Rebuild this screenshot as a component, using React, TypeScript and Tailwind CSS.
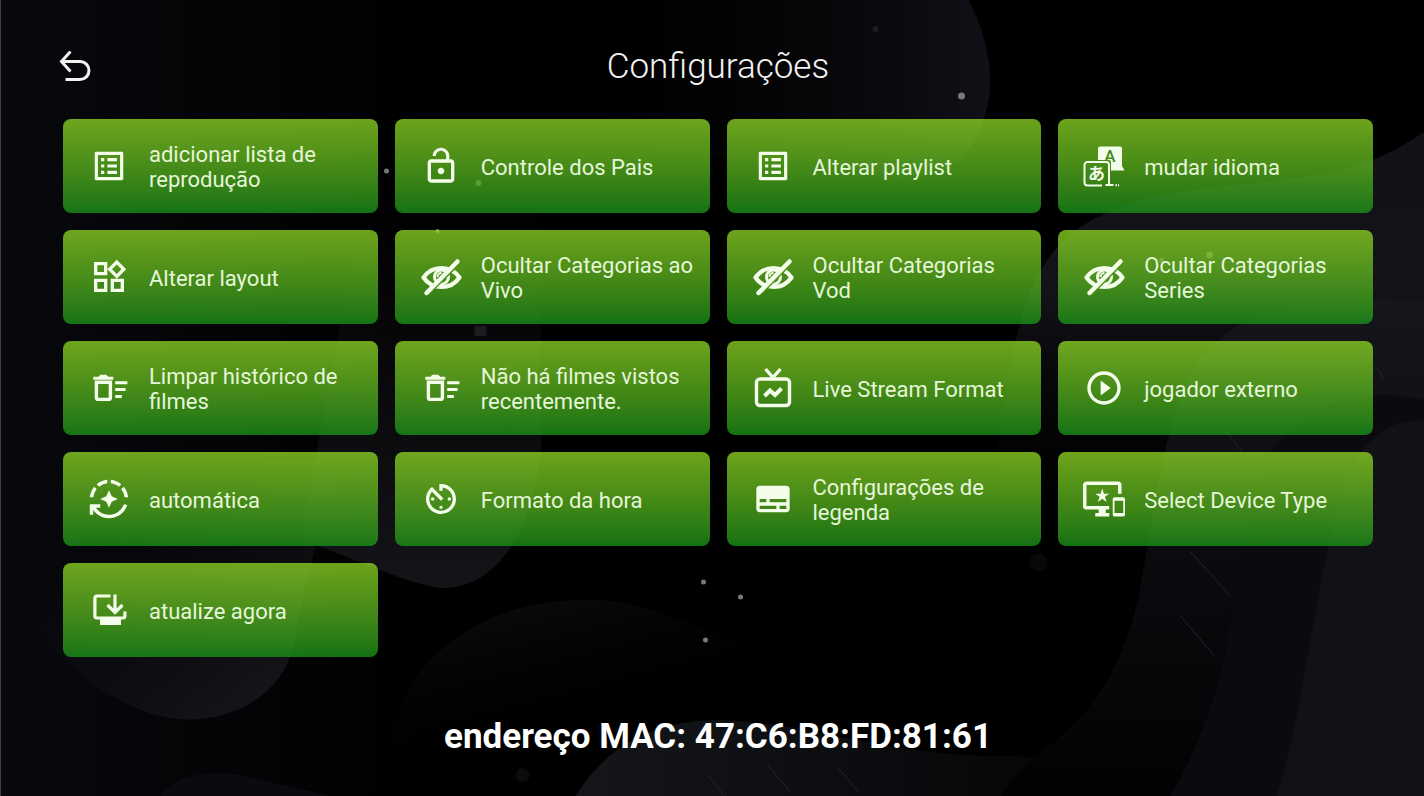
import type { ReactNode } from "react";
import {
  MdAutoMode,
  MdAvTimer,
  MdImportantDevices,
  MdListAlt,
  MdLockOpen,
  MdOutlineWidgets,
  MdPlayCircleOutline,
  MdSubtitles,
} from "react-icons/md";

interface SettingItem {
  label: string;
  icon: ReactNode;
}

function BackIcon() {
  return (
    <svg className="w-8 h-8" viewBox="0 0 32 32" fill="none" stroke="currentColor" strokeWidth="3">
      <path d="M11.5 0.5 2.5 10.500l9 10" />
      <path d="M2.5 10.500H21a9 9 0 0 1 0 18H6.5" />
    </svg>
  );
}

function HiddenEyeIcon() {
  return (
    <svg className="w-11 h-11" viewBox="0 0 44 44" fill="none" stroke="currentColor">
      <path
        d="M4.500 22.500C9 16 15 13 22.500 13S36 16 40.500 22.500C36 29 30 32 22.500 32S9 29 4.500 22.500Z"
        strokeWidth="4.200"
        strokeLinejoin="round"
      />
      <circle cx="22.500" cy="22" r="7" strokeWidth="3" />
      <path d="M18.500 22a4 4 0 0 1 4-4" strokeWidth="2" />
      <path d="M9.500 39.500 41.500 7.500" stroke="#4b931b" strokeWidth="2" />
      <path d="M7.500 38 38.500 6.500" strokeWidth="4.500" strokeLinecap="round" />
    </svg>
  );
}

function LanguageIcon() {
  return (
    <svg className="w-11 h-11" viewBox="0 0 44 44" fill="none">
      <path d="M18 2.500h20a2 2 0 0 1 2 2V22l2.500 4.500H29V18a2 2 0 0 0-2-2H16V4.500a2 2 0 0 1 2-2Z" fill="currentColor" />
      <text x="28" y="18" textAnchor="middle" fill="#3f8a18" fontSize="17" fontWeight="500" fontFamily="Roboto, sans-serif">
        A
      </text>
      <path d="M20 41.500H5.500a3 3 0 0 1-3-3V21a3 3 0 0 1 3-3H24a3 3 0 0 1 3 3v17.500" stroke="currentColor" strokeWidth="2" />
      <path d="M27 36v5M23.500 41h8M33.500 41.300h1.500M36 41.300h1" stroke="currentColor" strokeWidth="2" />
      <text
        x="14.500"
        y="36"
        textAnchor="middle"
        fill="currentColor"
        fontSize="17"
        fontWeight="700"
        fontFamily="'Noto Sans CJK JP', sans-serif"
      >
        あ
      </text>
    </svg>
  );
}

function LiveTvIcon() {
  return (
    <svg className="w-11 h-11" viewBox="0 0 44 44" fill="none" stroke="currentColor" strokeWidth="3.400">
      <rect x="5.500" y="13" width="33" height="26.500" rx="3.500" />
      <path d="M14.500 3 22 11.500 29.500 3" />
      <path d="m13.500 30 5.500-5.500 5 4.500 6.500-6.500" strokeWidth="4" />
    </svg>
  );
}

function ClearHistoryIcon() {
  return (
    <svg className="w-11 h-11" viewBox="0 0 44 44" fill="none" stroke="currentColor" strokeWidth="3">
      <path d="M6.300 10.800h5.200l1.800-2h6l1.800 2h5.200v3H6.300Z" fill="currentColor" stroke="none" />
      <path d="M9.400 16.200h14v15.200a2 2 0 0 1-2 2H11.400a2 2 0 0 1-2-2Z" strokeWidth="3.400" />
      <path d="M28.200 16.800h12.200M28.200 23.600h10.400M28.200 30.400h6.600" />
    </svg>
  );
}

function UpdateIcon() {
  return (
    <svg className="w-11 h-11" viewBox="0 0 44 44" fill="none" stroke="currentColor" strokeWidth="3.200">
      <path d="M23.500 8H9.900a2 2 0 0 0-2 2v18a2 2 0 0 0 2 2h26a2 2 0 0 0 2-2v-4.500" />
      <path d="M28 6.500V24M20.500 17l7.500 7.500 7.500-7.500" />
      <path d="M13 30h21v7H13Z" fill="currentColor" stroke="none" />
    </svg>
  );
}

const settings: SettingItem[] = [
  { label: "adicionar lista de reprodução", icon: <MdListAlt size={38} /> },
  { label: "Controle dos Pais", icon: <MdLockOpen size={40} /> },
  { label: "Alterar playlist", icon: <MdListAlt size={38} /> },
  { label: "mudar idioma", icon: <LanguageIcon /> },
  { label: "Alterar layout", icon: <MdOutlineWidgets size={40} /> },
  { label: "Ocultar Categorias ao Vivo", icon: <HiddenEyeIcon /> },
  { label: "Ocultar Categorias Vod", icon: <HiddenEyeIcon /> },
  { label: "Ocultar Categorias Series", icon: <HiddenEyeIcon /> },
  { label: "Limpar histórico de filmes", icon: <ClearHistoryIcon /> },
  { label: "Não há filmes vistos recentemente.", icon: <ClearHistoryIcon /> },
  { label: "Live Stream Format", icon: <LiveTvIcon /> },
  { label: "jogador externo", icon: <MdPlayCircleOutline size={40} /> },
  { label: "automática", icon: <MdAutoMode size={42} /> },
  { label: "Formato da hora", icon: <MdAvTimer size={40} /> },
  { label: "Configurações de legenda", icon: <MdSubtitles size={40} /> },
  { label: "Select Device Type", icon: <MdImportantDevices size={42} /> },
  { label: "atualize agora", icon: <UpdateIcon /> },
];

// Dark wallpaper: soft blobs, thin streaks and a few dots
function Wallpaper() {
  return (
    <svg
      className="absolute inset-0 w-full h-full"
      viewBox="0 0 1424 796"
      preserveAspectRatio="xMidYMid slice"
      aria-hidden="true"
    >
      <defs>
        <linearGradient id="blobDown" x1="0" y1="0" x2="0" y2="1">
          <stop offset="0.2" stopColor="#121216" stopOpacity="0" />
          <stop offset="1" stopColor="#141419" />
        </linearGradient>
        <linearGradient id="blobDiagonal" x1="0" y1="0" x2="1" y2="1">
          <stop offset="0.3" stopColor="#121216" stopOpacity="0" />
          <stop offset="0.8" stopColor="#131318" />
        </linearGradient>
        <linearGradient id="blobUp" x1="0" y1="0" x2="0.7" y2="1">
          <stop offset="0" stopColor="#101013" />
          <stop offset="0.6" stopColor="#030306" stopOpacity="0" />
        </linearGradient>
        <linearGradient id="hill" x1="0" y1="0" x2="1" y2="0">
          <stop offset="0" stopColor="#141619" />
          <stop offset="1" stopColor="#040406" />
        </linearGradient>
        <linearGradient id="blobRight" x1="0" y1="0" x2="1" y2="0">
          <stop offset="0.1" stopColor="#050507" stopOpacity="0" />
          <stop offset="1" stopColor="#111017" />
        </linearGradient>
        <linearGradient id="edge" x1="0" y1="0" x2="1" y2="0">
          <stop offset="0" stopColor="#08090d" />
          <stop offset="1" stopColor="#08090d" stopOpacity="0" />
        </linearGradient>
        <linearGradient id="wave" gradientUnits="userSpaceOnUse" x1="0" y1="130" x2="0" y2="520">
          <stop offset="0" stopColor="#111116" />
          <stop offset="0.4" stopColor="#131319" />
          <stop offset="1" stopColor="#050507" stopOpacity="0" />
        </linearGradient>
        <linearGradient id="ribbon" x1="0" y1="0" x2="0" y2="1">
          <stop offset="0" stopColor="#15151c" />
          <stop offset="1" stopColor="#020203" />
        </linearGradient>
      </defs>

      <rect width="420" height="796" fill="url(#edge)" />
      <path d="M560 0H968C990 40 996 90 982 122C966 172 920 190 850 170C760 145 640 180 560 90Z" fill="url(#blobRight)" />
      <path d="M380 100H530C542 190 540 330 541 430C540 520 500 590 440 588C400 582 350 556 300 540Z" fill="url(#blobDown)" />
      <path d="M20 460H340C316 540 300 600 294 640C284 700 220 730 160 716C110 704 50 660 20 600Z" fill="url(#blobDiagonal)" />
      <path d="M370 796C400 740 390 700 430 660C480 610 540 598 600 600C680 606 740 660 860 664L900 796Z" fill="url(#blobUp)" />
      <path d="M160 796C180 770 220 768 260 780L330 796Z" fill="#0a0b0e" />
      <path d="M575 796C610 740 660 720 720 720C820 724 880 756 1000 756C1060 756 1100 770 1120 796Z" fill="url(#hill)" />

      <path
        d="M1424 132C1390 152 1370 172 1250 184C1120 194 1060 220 1030 290C1005 360 1005 420 985 520H1424Z"
        fill="url(#wave)"
      />
      <path
        d="M1424 300C1330 292 1210 300 1178 400C1155 480 1156 500 1146 550C1136 620 1120 690 1050 745C1020 766 1010 780 1000 796H1424Z"
        fill="url(#ribbon)"
      />
      <path d="M1240 545C1232 620 1225 700 1170 796H1424V400C1330 380 1256 420 1240 545Z" fill="#0b0b0f" />
      <path d="M1328 545C1308 640 1300 720 1276 796H1424V420C1370 420 1345 460 1328 545Z" fill="#111116" />

      <g stroke="#25252a" strokeWidth="1">
        <path d="M1190 552l40 44M1180 616l34 40M1226 432l16 20M1375 366l8 12" />
        <path d="M708 776l16 20M766 764l24 28M838 768l20 24" />
      </g>

      <g fill="#77777c">
        <circle cx="961" cy="96" r="3.500" />
        <circle cx="386" cy="171" r="2.500" />
        <circle cx="703" cy="582" r="2.500" />
        <circle cx="740" cy="597" r="2.500" />
        <circle cx="705" cy="640" r="2.500" />
        <circle cx="478" cy="183" r="3" />
        <circle cx="437" cy="231" r="2" />
        <circle cx="1209" cy="255" r="3.500" />
        <circle cx="1161" cy="260" r="2.500" />
      </g>
      <circle cx="875" cy="29" r="3" fill="#1d1d21" />
      <circle cx="522" cy="775" r="7" fill="#0c0c0f" />
      <circle cx="1038" cy="562" r="9" fill="#07080a" />
      <rect x="474" y="326" width="12" height="10" fill="#1b1b20" />
    </svg>
  );
}

export default function App() {
  return (
    <div className="relative min-h-screen w-full overflow-hidden bg-black border-l border-[#3c3e44] font-[Roboto,sans-serif] text-[#f2f2f2]">
      <Wallpaper />

      <div className="relative min-h-screen flex flex-col pl-[62px] pr-[51px]">
        {/* Header */}
        <header className="grid grid-cols-[1fr_auto_1fr] items-center pt-[45px] pb-[30px]">
          <button type="button" aria-label="Voltar" className="-ml-1 w-8 h-8">
            <BackIcon />
          </button>
          <h1 className="text-[35px] leading-[44px] font-light">Configurações</h1>
        </header>

        {/* Settings */}
        <main className="grid grid-cols-4 gap-[17px]">
          {settings.map((item) => (
            <button
              key={item.label}
              type="button"
              className="h-[94px] flex items-center gap-[18px] pl-6 pr-4 rounded-lg text-left text-[#e6f6d8] bg-linear-to-b from-[#91da24]/75 to-[#17981a]/75"
            >
              <span className="w-11 h-11 shrink-0 flex items-center justify-center text-[#f4fdea]">{item.icon}</span>
              <span className="pt-0.5 text-[22px] leading-[25px]">{item.label}</span>
            </button>
          ))}
        </main>

        {/* Device address */}
        <footer className="flex-1 flex items-center justify-center pt-5">
          <p className="text-[35px] leading-[44px] font-bold text-white">endereço MAC: 47:C6:B8:FD:81:61</p>
        </footer>
      </div>
    </div>
  );
}
